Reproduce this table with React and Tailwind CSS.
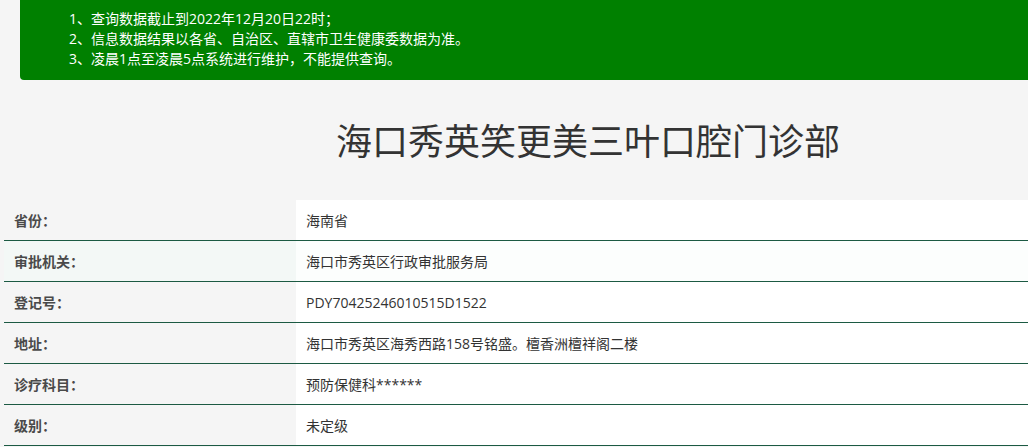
const rows = [
  { label: '省份：', value: '海南省' },
  { label: '审批机关：', value: '海口市秀英区行政审批服务局' },
  { label: '登记号：', value: 'PDY70425246010515D1522' },
  { label: '地址：', value: '海口市秀英区海秀西路158号铭盛。檀香洲檀祥阁二楼' },
  { label: '诊疗科目：', value: '预防保健科******' },
  { label: '级别：', value: '未定级' },
];

export default function App() {
  return (
    <div
      className="w-[1028px] h-[447px] overflow-hidden bg-[#f5f5f5]"
      style={{ fontFamily: '"Open Sans", "Noto Sans CJK SC", sans-serif' }}
    >
      <div className="w-[1168px] ml-[4px]">
        {/* Notice */}
        <div className="ml-[16px] mr-[16px] h-[80px] bg-[#008000] rounded-b-[4px] pt-[9px] pl-[49px] text-white text-[14px] leading-[20px]">
          <p>1、查询数据截止到2022年12月20日22时；</p>
          <p>2、信息数据结果以各省、自治区、直辖市卫生健康委数据为准。</p>
          <p>3、凌晨1点至凌晨5点系统进行维护，不能提供查询。</p>
        </div>

        {/* Title */}
        <h1 className="mt-[32px] h-[88px] text-center text-[36px] leading-[60px] text-[#333]">
          海口秀英笑更美三叶口腔门诊部
        </h1>

        {/* Detail table */}
        <div>
          {rows.map((row, i) => (
            <div
              key={i}
              className={`flex h-[41px] border-b border-[#1c5a43] ${i === 1 ? 'bg-[#f3f8f6]' : ''}`}
            >
              <div className="w-[292px] pl-[10px] flex items-center text-[14px] font-bold text-[#4a4a4a]">
                {row.label}
              </div>
              <div className={`flex-1 pl-[10px] flex items-center text-[14px] text-[#333] ${i === 1 ? 'bg-[#fcfefd]' : 'bg-white'}`}>
                {row.value}
              </div>
            </div>
          ))}
        </div>
      </div>
    </div>
  );
}
